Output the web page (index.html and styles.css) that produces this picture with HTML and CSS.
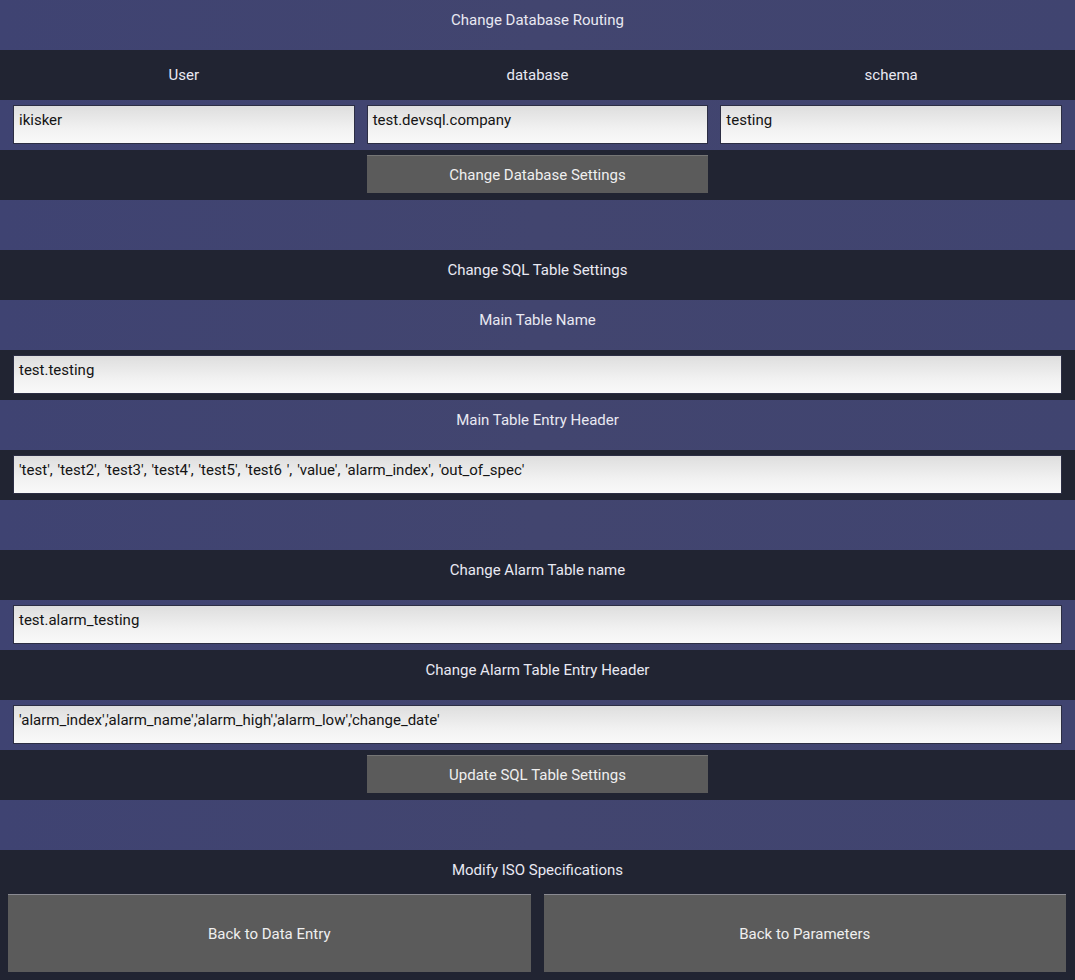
FILE: index.html
```html
<!DOCTYPE html>
<html>
<head>
<meta charset="utf-8">
<link rel="stylesheet" href="styles.css">
</head>
<body>
<div class="page">
  <div class="row blue heading">Change Database Routing</div>
  <div class="row dark grid3 labels"><div>User</div><div>database</div><div>schema</div></div>
  <div class="row blue grid3 inputs">
    <div class="field">ikisker</div>
    <div class="field">test.devsql.company</div>
    <div class="field">testing</div>
  </div>
  <div class="row dark grid3 inputs">
    <div></div>
    <div class="btn">Change Database Settings</div>
    <div></div>
  </div>
  <div class="row blue"></div>
  <div class="row dark heading">Change SQL Table Settings</div>
  <div class="row blue heading">Main Table Name</div>
  <div class="row dark inputs"><div class="field">test.testing</div></div>
  <div class="row blue heading">Main Table Entry Header</div>
  <div class="row dark inputs"><div class="field">'test', 'test2', 'test3', 'test4', 'test5', 'test6 ', 'value', 'alarm_index', 'out_of_spec'</div></div>
  <div class="row blue"></div>
  <div class="row dark heading">Change Alarm Table name</div>
  <div class="row blue inputs"><div class="field">test.alarm_testing</div></div>
  <div class="row dark heading">Change Alarm Table Entry Header</div>
  <div class="row blue inputs"><div class="field">'alarm_index','alarm_name','alarm_high','alarm_low','change_date'</div></div>
  <div class="row dark grid3 inputs">
    <div></div>
    <div class="btn">Update SQL Table Settings</div>
    <div></div>
  </div>
  <div class="row blue"></div>
  <div class="footer dark">
    <div class="heading foot-title">Modify ISO Specifications</div>
    <div class="nav">
      <div class="btn big">Back to Data Entry</div>
      <div class="btn big">Back to Parameters</div>
    </div>
  </div>
</div>
</body>
</html>
```

FILE: styles.css
```css
html, body {
  margin: 0;
  padding: 0;
  background: #212432;
}
body {
  font-family: Roboto, "Noto Sans", sans-serif;
  font-size: 15px;
  color: #e9e9f2;
}
.page {
  width: 1075px;
  height: 980px;
  display: flex;
  flex-direction: column;
}
.row {
  height: 50px;
  box-sizing: border-box;
  flex: none;
}
.blue {
  background: linear-gradient(90deg, #3f4372 0%, #42456f 50%, #404470 100%);
}
.dark {
  background: #212432;
}
.heading {
  text-align: center;
  line-height: 18px;
  padding-top: 11px;
}
.grid3 {
  display: grid;
  grid-template-columns: 1fr 1fr 1fr;
  column-gap: 12px;
  padding: 0 13px;
}
.labels > div {
  text-align: center;
  line-height: 50px;
}
.inputs {
  padding: 5px 13px 0 13px;
}
.field {
  height: 39px;
  box-sizing: border-box;
  border: 1px solid #2c2e44;
  background: linear-gradient(180deg, #dedede 0%, #f1f1f1 60%, #f9f9f9 100%);
  color: #141414;
  font-size: 15px;
  word-spacing: 1.1px;
  padding: 5px 5px 0 5px;
  line-height: 18px;
  white-space: pre;
  overflow: hidden;
}
.btn {
  height: 38px;
  box-sizing: border-box;
  background: #5b5b5b;
  border-top: 1px solid #757575;
  color: #efefef;
  display: flex;
  align-items: center;
  justify-content: center;
}
.footer {
  flex: 1;
  display: flex;
  flex-direction: column;
}
.foot-title {
  height: 44px;
  box-sizing: border-box;
}
.nav {
  display: grid;
  grid-template-columns: 1fr 1fr;
  column-gap: 13px;
  padding: 0 9px 0 8px;
}
.btn.big {
  height: 78px;
  border-top: 1px solid #8a8a92;
}
```
